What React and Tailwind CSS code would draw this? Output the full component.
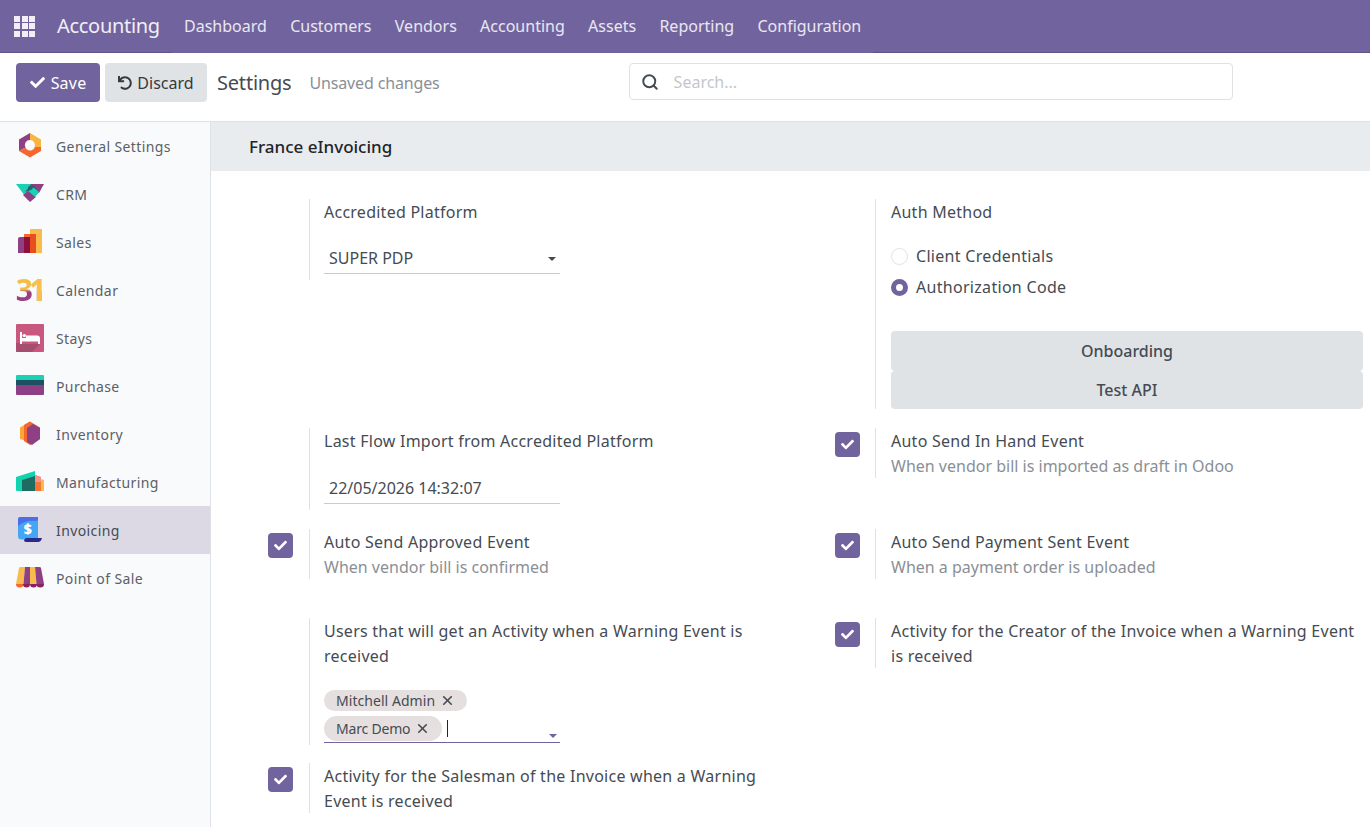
import React from 'react';
import { FaCheck, FaUndo } from 'react-icons/fa';
import { LuSearch, LuX } from 'react-icons/lu';

const font = "font-['Noto_Sans',sans-serif]";

function AppIcon({ name }) {
  switch (name) {
    case 'General Settings':
      return (
        <svg width="28" height="28" viewBox="0 0 28 28">
          <path d="M14 1 L25 7.5 V16 L18.5 15 A5 5 0 0 0 14 8 Z" fill="#f6b63f" />
          <path d="M14 1 L3 7.5 V19 L9.5 15.5 A5 5 0 0 1 14 8 Z" fill="#8f3f83" />
          <path d="M3 19 L14 25.5 L25 19 V15 H18.8 A5 5 0 0 1 9.5 15.5 Z" fill="#f2682e" />
        </svg>
      );
    case 'CRM':
      return (
        <svg width="28" height="28" viewBox="0 0 28 28">
          <path d="M0 4 H17 L22 9 L15 19 L12 20 Z" fill="#1bd1b5" />
          <path d="M14 4 H28 L23 13 Z" fill="#8f3f83" />
          <path d="M9 12 L14 6 H18 L23 12 L20 15 L14 10 Z" fill="#25646c" />
          <path d="M7 15 L12 11 L20 17 L14 22 Z" fill="#8f3f83" />
          <path d="M13 11 L17 7 L23 12 L19 17 Z" fill="#1bd1b5" />
          <path d="M12 7 L15 5 L19 6 L15 10 L12 11 Z" fill="#25646c" />
        </svg>
      );
    case 'Sales':
      return (
        <svg width="28" height="28" viewBox="0 0 28 28">
          <path d="M14 1 H26 V25 H14 Z" fill="#f9bb4b" />
          <path d="M8 6 H20 V25 H8 Z" fill="#f26a2e" />
          <path d="M2 11 Q2 9 4 9 H14 V25 H2 Z" fill="#8f3f83" />
          <rect x="8" y="9" width="6" height="16" fill="#8c0f3e" />
          <rect x="14" y="6" width="6" height="19" fill="#e84e1f" />
        </svg>
      );
    case 'Calendar':
      return (
        <div className="flex w-7 h-7 items-center justify-center font-['Open_Sans',sans-serif] font-bold text-[30px] leading-none pl-[2px]">
          <span className="tracking-[-4px] pr-[4px] bg-[linear-gradient(90deg,transparent_58%,#f9c04e_58%),linear-gradient(180deg,#f6bd45_48%,#9a3f83_58%)] bg-clip-text [-webkit-text-fill-color:transparent]">31</span>
        </div>
      );
    case 'Stays':
      return (
        <svg width="28" height="28" viewBox="0 0 28 28">
          <rect width="28" height="28" rx="1" fill="#c9587f" />
          <path d="M4 19 L13 28 H1 Q0 28 0 27 V19 Z M4 20 H24 L16 28 H13 Z" fill="#a74d6d" />
          <path d="M4 8 H6 V14 H10 V11.5 H21 Q24 11.5 24 14.5 V20 H22 V17.5 H6 V20 H4 Z" fill="#fff" />
          <circle cx="8.3" cy="11.6" r="1.7" fill="#fff" />
        </svg>
      );
    case 'Purchase':
      return (
        <svg width="28" height="28" viewBox="0 0 28 28">
          <path d="M0 4 Q0 3 1 3 H27 Q28 3 28 4 V8 H0 Z" fill="#1bd1b5" />
          <rect y="8" width="28" height="5" fill="#1d5060" />
          <path d="M0 13 H28 V22 Q28 23 27 23 H1 Q0 23 0 22 Z" fill="#8f3f83" />
        </svg>
      );
    case 'Inventory':
      return (
        <svg width="28" height="28" viewBox="0 0 28 28">
          <path d="M4 7.5 L14 1.5 V22 L4 19 Z" fill="#f9a83a" />
          <path d="M8 5 L14 1.5 L24 7.5 V19 L14 25 L8 21 Z" fill="#f2682e" />
          <path d="M11 8 L17 4 L24 8 V19 L16 25 L11 22 Z" fill="#8f3f83" />
        </svg>
      );
    case 'Manufacturing':
      return (
        <svg width="28" height="28" viewBox="0 0 28 28">
          <path d="M19 9 L28 12 V23 H19 Z" fill="#f9bb4b" />
          <path d="M19 7 L25 9 V23 H19 Z" fill="#f26a2e" opacity=".85" />
          <path d="M19 7 L25 9 V14 L19 14 Z" fill="#f5928f" />
          <path d="M0 9 L19 3 V23 H1 Q0 23 0 22 Z" fill="#10d4ae" />
          <path d="M6 12 L19 8 V23 H6 Z" fill="#1f6b62" />
        </svg>
      );
    case 'Invoicing':
      return (
        <svg width="28" height="28" viewBox="0 0 28 28">
          <path d="M2 3 Q2 1 4 1 H22 V20 H2 Z" fill="#4a6ee8" />
          <path d="M2 10 Q9 4 20 5 L22 4 V23 H9 Q2 25 2 20 Z" fill="#45a6f5" />
          <path d="M10 26 Q8 26 8 24 Q9 22 11 22 H26 Q25 26 22 26 Z" fill="#2b2a8a" />
          <text x="12" y="18" textAnchor="middle" fontSize="14" fontWeight="800" fill="#fff" fontFamily="Open Sans">$</text>
        </svg>
      );
    default:
      return (
        <svg width="28" height="28" viewBox="0 0 28 28">
          <path d="M3 4 Q3 3 5 3 H9 L7.5 20 H0 Z" fill="#f9bb4b" />
          <path d="M9 3 H14 V20 H7.5 Z" fill="#8f3f83" />
          <path d="M14 3 H19 L20.5 20 H14 Z" fill="#f9bb4b" />
          <path d="M19 3 H23 Q25 3 25 4 L28 20 H20.5 Z" fill="#8f3f83" />
          <path d="M0 20 H7.5 A3.7 3.5 0 0 1 0 20 Z" fill="#f26a2e" />
          <path d="M7 20 H14 A3.5 3.5 0 0 1 7 20 Z" fill="#8c1f5f" />
          <path d="M14 20 H21 A3.5 3.5 0 0 1 14 20 Z" fill="#8c1f5f" />
          <path d="M20.5 20 H28 A3.7 3.5 0 0 1 20.5 20 Z" fill="#8c1f5f" />
        </svg>
      );
  }
}

const apps = ['General Settings', 'CRM', 'Sales', 'Calendar', 'Stays', 'Purchase', 'Inventory', 'Manufacturing', 'Invoicing', 'Point of Sale'];
const menus = ['Dashboard', 'Customers', 'Vendors', 'Accounting', 'Assets', 'Reporting', 'Configuration'];

function Check() {
  return (
    <span className="w-[25px] h-[25px] rounded-[4px] bg-[#71639e] flex items-center justify-center text-white">
      <FaCheck size={13} />
    </span>
  );
}

function Setting({ check, right, title, desc, children, className = '' }) {
  return (
    <div className={`flex w-[566px] shrink-0 ${className}`}>
      <div className={`w-[57px] pt-[4px] shrink-0 ${right ? 'pl-[17px]' : 'pl-[16px]'}`}>{check && <Check />}</div>
      <div className={`flex-1 border-l border-[#dee2e6] pr-[22px] pt-px text-[16px] leading-[25px] ${right ? 'pl-[15px]' : 'pl-[14px]'}`}>
        <div className="text-[#454b53] tracking-[0.25px]">{title}</div>
        {desc && <div className="text-[#8a8f96]">{desc}</div>}
        {children}
      </div>
    </div>
  );
}

export default function App() {
  return (
    <div className={`${font} w-[1370px] h-[827px] overflow-hidden bg-white flex flex-col text-[#454b53]`}>
      <header className="h-[53px] shrink-0 bg-[#71639e] flex text-white/90">
        <div className="w-[172px] shrink-0 border-b border-[#5f5389] flex items-center">
          <div className="grid grid-cols-3 gap-[1.5px] w-[21px] ml-[14px] mr-[22px]">
            {Array.from({ length: 9 }).map((_, i) => <span key={i} className="w-[6px] h-[6px] bg-white/90" />)}
          </div>
          <div className="text-[20px] tracking-[-0.3px] whitespace-nowrap text-white/90">Accounting</div>
        </div>
        <nav className="ml-[12px] flex items-center gap-[23.3px] text-[16px] text-white/85 pb-px">
          {menus.map((m) => <span key={m}>{m}</span>)}
        </nav>
        <div className="flex-1 ml-[12px] border-b border-[#5f5389]" />
      </header>

      <div className="h-[69px] shrink-0 flex items-start pt-[10px] pl-[16px] border-b border-[#dee2e6]">
        <button className="h-[39px] w-[84px] rounded-[4px] bg-[#71639e] text-white text-[16px] flex items-center justify-center gap-[6px]">
          <FaCheck size={15} /> <span className="tracking-[0.2px]">Save</span>
        </button>
        <button className="ml-[5px] h-[39px] w-[102px] rounded-[4px] bg-[#e0e3e6] text-[#343a40] text-[16px] flex items-center justify-center gap-[5px]">
          <FaUndo size={14} /> Discard
        </button>
        <span className="ml-[10px] h-[39px] flex items-center text-[20px] tracking-[-0.2px] text-[#454b53]">Settings</span>
        <span className="ml-[18px] h-[39px] flex items-center text-[16px] tracking-[-0.15px] text-[#8a8f96]">Unsaved changes</span>
        <div className="ml-[189px] w-[604px] h-[37px] border border-[#dfe1e4] rounded-[4px] flex items-center px-[11px] gap-[15px] text-[#c3c7cb] text-[16px]">
          <LuSearch size={18} strokeWidth={2.6} className="text-[#454b53]" />
          <span>Search...</span>
        </div>
      </div>

      <div className="flex-1 flex min-h-0">
        <aside className="w-[211px] shrink-0 bg-[#f9fafb] border-r border-[#dee2e6]">
          {apps.map((a) => (
            <div key={a} className={`h-[48px] flex items-center pl-[16px] gap-[12px] text-[14px] tracking-[0.4px] ${a === 'Invoicing' ? 'bg-[#dcd9e5] text-[#454b53]' : 'text-[#5b6068]'}`}>
              <AppIcon name={a} />
              <span>{a}</span>
            </div>
          ))}
        </aside>

        <main className="flex-1 min-w-0 overflow-hidden">
          <div className="h-[49px] bg-[#e9ecef] flex items-center pl-[38px] text-[17px] font-medium text-[#212529]">France eInvoicing</div>
          <div className="pl-[41px] pt-[28px] flex flex-col">
            <div className="flex h-[210px]">
              <div className="w-[566px] shrink-0 flex items-start">
                <Setting title="Accredited Platform">
                  <div className="mt-[19px] w-[236px] h-[30px] border-b border-[#c8ccd1] flex items-center justify-between pl-[5px] pr-[4px]">
                    <span>SUPER PDP</span>
                    <span className="w-0 h-0 border-x-[4px] border-x-transparent border-t-[4px] border-t-[#454b53]" />
                  </div>
                  <div className="h-[6px]" />
                </Setting>
              </div>
              <Setting right title="Auth Method">
                <div className="mt-[18.5px] flex items-center gap-[8px] h-[25px] tracking-[0.3px]">
                  <span className="w-[17px] h-[17px] rounded-full border border-[#dee2e6] bg-white" />
                  <span>Client Credentials</span>
                </div>
                <div className="mt-[6px] flex items-center gap-[8px] h-[25px] tracking-[0.3px]">
                  <span className="w-[17px] h-[17px] rounded-full border-[5px] border-[#71639e] bg-white" />
                  <span>Authorization Code</span>
                </div>
                <div className="mt-[31.5px] -mr-[1px] flex flex-col font-medium">
                  <div className="h-[40px] rounded-[4px] bg-[#e0e3e6] flex items-center justify-center">Onboarding</div>
                  <div className="h-[38px] rounded-[4px] bg-[#e0e3e6] flex items-center justify-center">Test API</div>
                </div>
              </Setting>
            </div>

            <div className="flex mt-[19px]">
              <Setting title="Last Flow Import from Accredited Platform">
                <div className="mt-[20px] w-[236px] h-[30px] border-b border-[#c8ccd1] pl-[5px] flex items-center">22/05/2026 14:32:07</div>
                <div className="h-[6px]" />
              </Setting>
              <Setting right check className="h-[50px]" title="Auto Send In Hand Event" desc="When vendor bill is imported as draft in Odoo" />
            </div>

            <div className="flex mt-[19px]">
              <Setting check className="h-[50px]" title="Auto Send Approved Event" desc="When vendor bill is confirmed" />
              <Setting right check className="h-[50px]" title="Auto Send Payment Sent Event" desc="When a payment order is uploaded" />
            </div>

            <div className="flex mt-[39px]">
              <Setting title="Users that will get an Activity when a Warning Event is received">
                <div className="mt-[21px] w-[236px] border-b border-[#71639e] text-[14px] h-[53px] flex flex-col gap-[5px] relative">
                  <span className="self-start h-[21px] rounded-full bg-[#e5dfdf] px-[12px] flex items-center gap-[5px] tracking-[0.05px]">Mitchell Admin <LuX size={15} strokeWidth={2.6} /></span>
                  <div className="flex items-center gap-[5px]">
                    <span className="h-[25px] rounded-full bg-[#e5dfdf] px-[12px] flex items-center gap-[5px] tracking-[-0.2px]">Marc Demo <LuX size={15} strokeWidth={2.6} /></span>
                    <span className="w-px h-[17px] bg-[#212529]" />
                  </div>
                  <span className="absolute right-[3px] bottom-[4px] w-0 h-0 border-x-[4px] border-x-transparent border-t-[4px] border-t-[#71639e]" />
                </div>
                <div className="h-[2px]" />
              </Setting>
              <Setting right check className="h-[50px]" title="Activity for the Creator of the Invoice when a Warning Event is received" />
            </div>

            <div className="flex mt-[18px]">
              <Setting check className="h-[50px]" title="Activity for the Salesman of the Invoice when a Warning Event is received" />
            </div>
          </div>
        </main>
      </div>
    </div>
  );
}
